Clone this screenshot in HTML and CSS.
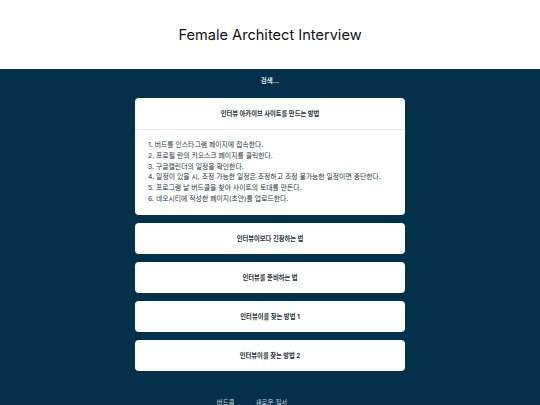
FILE: index.html
```html
<!DOCTYPE html>
<html lang="ko">
<head>
<meta charset="utf-8">
<link rel="stylesheet" href="styles.css">
</head>
<body>
<header class="top">
  <h1 class="title">Female Architect Interview</h1>
</header>
<main class="main">
  <div class="search">검색...</div>
  <div class="list">
    <section class="card">
      <div class="card-head">인터뷰 아카이브 사이트를 만드는 방법</div>
      <ol class="card-body">
        <li>버드를 인스타그램 페이지에 접속한다.</li>
        <li>프로필 란의 키오스크 페이지를 클릭한다.</li>
        <li>구글캘린더의 일정을 확인한다.</li>
        <li>일정이 있을 시, 조정 가능한 일정은 조정하고 조정 불가능한 일정이면 중단한다.</li>
        <li>프로그램 날 버드콜을 찾아 사이트의 토대를 만든다.</li>
        <li>네오시티에 작성한 페이지(초안)를 업로드한다.</li>
      </ol>
    </section>
    <section class="card"><div class="card-head">인터뷰이보다 긴장하는 법</div></section>
    <section class="card"><div class="card-head">인터뷰를 준비하는 법</div></section>
    <section class="card"><div class="card-head">인터뷰이를 찾는 방법 1</div></section>
    <section class="card"><div class="card-head">인터뷰이를 찾는 방법 2</div></section>
  </div>
  <footer class="foot">
    <span>버드콜</span>
    <span>새로운 질서</span>
  </footer>
</main>
</body>
</html>
```

FILE: styles.css
```css
* { box-sizing: border-box; }
html, body { margin: 0; padding: 0; }
body {
  font-family: Inter, "Noto Sans CJK KR", sans-serif;
  background: #03304a;
  color: #1f2a35;
}
.top {
  background: #ffffff;
  height: 69px;
  display: flex;
  align-items: center;
  justify-content: center;
}
.title {
  margin: 0;
  font-size: 14.6px;
  font-weight: 400;
  color: #111;
}
.main {
  background: #03304a;
  display: flex;
  flex-direction: column;
  align-items: center;
  padding-top: 6px;
}
.search {
  color: #dbe3e8;
  font-size: 6.5px;
  font-weight: 700;
  height: 12px;
  line-height: 12px;
  margin-bottom: 11px;
}
.list {
  width: 270px;
  display: flex;
  flex-direction: column;
  gap: 8px;
}
.card {
  background: #fff;
  border-radius: 4px;
  overflow: hidden;
}
.card-head {
  height: 31px;
  display: flex;
  align-items: center;
  justify-content: center;
  font-size: 6.3px;
  font-weight: 700;
  color: #26313c;
}
.card-body {
  margin: 0;
  border-top: 1px solid #e6e9ec;
  padding: 10px 10px 10px 13px;
  list-style: none;
  counter-reset: step;
  font-size: 6.85px;
  line-height: 10.8px;
  color: #2a3440;
}
.card-body li { counter-increment: step; }
.card-body li::before { content: counter(step) ". "; }
.foot {
  margin-top: 26px;
  display: flex;
  gap: 21px;
  font-size: 6.5px;
  color: #c9d3da;
  padding-right: 36px;
}
```
